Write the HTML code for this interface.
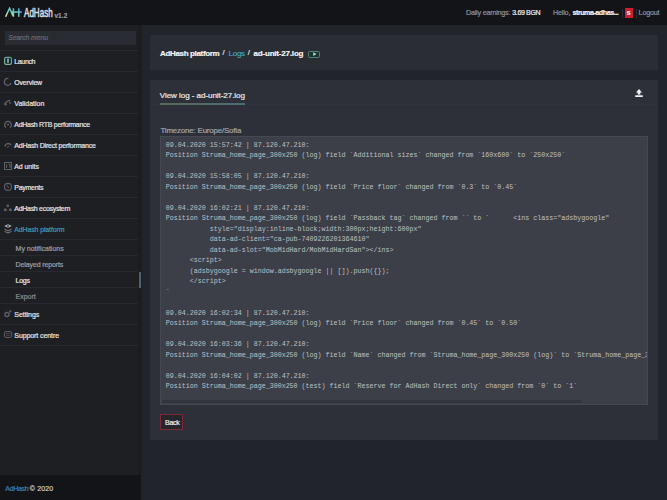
<!DOCTYPE html>
<html><head><meta charset="utf-8">
<style>
*{margin:0;padding:0}
html,body{width:667px;height:500px;overflow:hidden;background:#21242b}
body{position:relative;font-family:"Liberation Sans",sans-serif}
.b{position:absolute}
.t{position:absolute;white-space:nowrap;-webkit-text-stroke:0.2px currentColor}
</style></head><body>
<div class="b" style="left:0px;top:0px;width:667px;height:500px;background:#21242b;"></div>
<div class="b" style="left:0px;top:0px;width:667px;height:25px;background:#131418;"></div>
<div class="b" style="left:0px;top:25px;width:141px;height:450px;background:#1e1f23;"></div>
<div class="b" style="left:138px;top:25px;width:3px;height:450px;background:#1b1c20;"></div>
<div class="b" style="left:141px;top:25px;width:2px;height:450px;background:#1f2128;"></div>
<div class="b" style="left:0px;top:475px;width:141px;height:25px;background:#131418;"></div>
<svg class="b" style="left:4px;top:7px" width="19" height="11" viewBox="0 0 19 11">
<defs><linearGradient id="lg" x1="0" y1="1" x2="1" y2="0"><stop offset="0" stop-color="#e2eaa0"/><stop offset="0.45" stop-color="#7cd0c0"/><stop offset="1" stop-color="#2fa8d8"/></linearGradient></defs>
<path d="M1.6 9.8 L5.6 1.2 L8.8 8.4 M9.4 1.2 V9.8 M14.8 1.2 V9.8 M7.2 5.0 H17.8" stroke="url(#lg)" stroke-width="1.5" fill="none"/>
</svg>
<div class="t" style="left:24px;top:6.39px;font-size:12.6px;line-height:14.49px;color:#dcdde0;letter-spacing:0px;font-weight:normal;font-style:normal;font-family:'Liberation Sans',sans-serif;transform:scaleX(0.64);transform-origin:0 0;-webkit-text-stroke:0.55px currentColor;">AdHash</div>
<div class="t" style="left:54.4px;top:12.10px;font-size:6.4px;line-height:7.36px;color:#9a9ca1;letter-spacing:0.12px;font-weight:bold;font-style:normal;font-family:'Liberation Sans',sans-serif;">v1.2</div>
<div class="t" style="left:466px;top:8.57px;font-size:7.2px;line-height:8.28px;color:#909298;letter-spacing:-0.22px;font-weight:normal;font-style:normal;font-family:'Liberation Sans',sans-serif;">Daily earnings:</div>
<div class="t" style="left:512.3px;top:8.75px;font-size:7.0px;line-height:8.05px;color:#eeeeef;letter-spacing:-0.35px;font-weight:normal;font-style:normal;font-family:'Liberation Sans',sans-serif;">3.69 BGN</div>
<div class="t" style="left:553px;top:8.57px;font-size:7.2px;line-height:8.28px;color:#909298;letter-spacing:-0.2px;font-weight:normal;font-style:normal;font-family:'Liberation Sans',sans-serif;">Hello,</div>
<div class="t" style="left:572.5px;top:8.57px;font-size:7.2px;line-height:8.28px;color:#f2f2f2;letter-spacing:-0.5px;font-weight:bold;font-style:normal;font-family:'Liberation Sans',sans-serif;">struma-adhas...</div>
<div class="b" style="left:622px;top:9px;width:1px;height:9px;background:#2a2b31;"></div>
<div class="b" style="left:624.6px;top:8.2px;width:8.7px;height:10.2px;background:#cc1d2f;"></div>
<div class="t" style="left:626.7px;top:10.44px;font-size:5.6px;line-height:6.44px;color:#ffffff;letter-spacing:0px;font-weight:bold;font-style:normal;font-family:'Liberation Sans',sans-serif;">S</div>
<div class="b" style="left:636px;top:9px;width:1px;height:9px;background:#2a2b31;"></div>
<div class="t" style="left:638.6px;top:8.57px;font-size:7.2px;line-height:8.28px;color:#909298;letter-spacing:-0.2px;font-weight:normal;font-style:normal;font-family:'Liberation Sans',sans-serif;">Logout</div>
<div class="b" style="left:4.5px;top:30.5px;width:131.5px;height:14.5px;background:#2a2c33;"></div>
<div class="t" style="left:8.2px;top:34.04px;font-size:6.9px;line-height:7.93px;color:#676a72;letter-spacing:-0.12px;font-weight:normal;font-style:italic;font-family:'Liberation Sans',sans-serif;">Search menu</div>
<div class="b" style="left:0px;top:50px;width:138px;height:1px;background:#28292e;"></div>
<div class="t" style="left:14.3px;top:57.95px;font-size:7px;line-height:8.05px;color:#e4e4e6;letter-spacing:-0.36px;font-weight:normal;font-style:normal;font-family:'Liberation Sans',sans-serif;">Launch</div>
<div class="b" style="left:0px;top:71px;width:138px;height:1px;background:#28292e;"></div>
<div class="t" style="left:14.3px;top:79.00px;font-size:7px;line-height:8.05px;color:#e4e4e6;letter-spacing:-0.19px;font-weight:normal;font-style:normal;font-family:'Liberation Sans',sans-serif;">Overview</div>
<div class="b" style="left:0px;top:92px;width:138px;height:1px;background:#28292e;"></div>
<div class="t" style="left:14.3px;top:100.05px;font-size:7px;line-height:8.05px;color:#e4e4e6;letter-spacing:-0.02px;font-weight:normal;font-style:normal;font-family:'Liberation Sans',sans-serif;">Validation</div>
<div class="b" style="left:0px;top:113px;width:138px;height:1px;background:#28292e;"></div>
<div class="t" style="left:14.3px;top:121.10px;font-size:7px;line-height:8.05px;color:#e4e4e6;letter-spacing:-0.29px;font-weight:normal;font-style:normal;font-family:'Liberation Sans',sans-serif;">AdHash RTB performance</div>
<div class="b" style="left:0px;top:134px;width:138px;height:1px;background:#28292e;"></div>
<div class="t" style="left:14.3px;top:142.15px;font-size:7px;line-height:8.05px;color:#e4e4e6;letter-spacing:-0.2px;font-weight:normal;font-style:normal;font-family:'Liberation Sans',sans-serif;">AdHash Direct performance</div>
<div class="b" style="left:0px;top:155px;width:138px;height:1px;background:#28292e;"></div>
<div class="t" style="left:14.3px;top:163.20px;font-size:7px;line-height:8.05px;color:#e4e4e6;letter-spacing:-0.1px;font-weight:normal;font-style:normal;font-family:'Liberation Sans',sans-serif;">Ad units</div>
<div class="b" style="left:0px;top:176px;width:138px;height:1px;background:#28292e;"></div>
<div class="t" style="left:14.3px;top:184.25px;font-size:7px;line-height:8.05px;color:#e4e4e6;letter-spacing:-0.29px;font-weight:normal;font-style:normal;font-family:'Liberation Sans',sans-serif;">Payments</div>
<div class="b" style="left:0px;top:197px;width:138px;height:1px;background:#28292e;"></div>
<div class="t" style="left:14.3px;top:205.30px;font-size:7px;line-height:8.05px;color:#e4e4e6;letter-spacing:-0.29px;font-weight:normal;font-style:normal;font-family:'Liberation Sans',sans-serif;">AdHash ecosystem</div>
<div class="b" style="left:0px;top:218px;width:138px;height:1px;background:#28292e;"></div>
<div class="t" style="left:14.3px;top:226.35px;font-size:7px;line-height:8.05px;color:#3d97c0;letter-spacing:-0.14px;font-weight:normal;font-style:normal;font-family:'Liberation Sans',sans-serif;">AdHash platform</div>
<div class="b" style="left:0px;top:239px;width:138px;height:1px;background:#28292e;"></div>
<div class="t" style="left:15.6px;top:244.50px;font-size:7px;line-height:8.05px;color:#9d9fa5;letter-spacing:-0.01px;font-weight:normal;font-style:normal;font-family:'Liberation Sans',sans-serif;">My notifications</div>
<div class="b" style="left:0px;top:255px;width:138px;height:1px;background:#28292e;"></div>
<div class="t" style="left:15.6px;top:260.55px;font-size:7px;line-height:8.05px;color:#9d9fa5;letter-spacing:-0.12px;font-weight:normal;font-style:normal;font-family:'Liberation Sans',sans-serif;">Delayed reports</div>
<div class="b" style="left:0px;top:271px;width:138px;height:1px;background:#28292e;"></div>
<div class="t" style="left:15.6px;top:276.60px;font-size:7px;line-height:8.05px;color:#e8e8ea;letter-spacing:-0.27px;font-weight:normal;font-style:normal;font-family:'Liberation Sans',sans-serif;">Logs</div>
<div class="b" style="left:0px;top:287px;width:138px;height:1px;background:#28292e;"></div>
<div class="t" style="left:15.6px;top:292.65px;font-size:7px;line-height:8.05px;color:#8c8e94;letter-spacing:-0.02px;font-weight:normal;font-style:normal;font-family:'Liberation Sans',sans-serif;">Export</div>
<div class="b" style="left:0px;top:303px;width:138px;height:1px;background:#28292e;"></div>
<div class="t" style="left:14.3px;top:311.10px;font-size:7px;line-height:8.05px;color:#e4e4e6;letter-spacing:-0.05px;font-weight:normal;font-style:normal;font-family:'Liberation Sans',sans-serif;">Settings</div>
<div class="b" style="left:0px;top:324px;width:138px;height:1px;background:#28292e;"></div>
<div class="t" style="left:14.3px;top:332.15px;font-size:7px;line-height:8.05px;color:#e4e4e6;letter-spacing:-0.09px;font-weight:normal;font-style:normal;font-family:'Liberation Sans',sans-serif;">Support centre</div>
<div class="b" style="left:0px;top:345px;width:138px;height:1px;background:#28292e;"></div>
<div class="b" style="left:139px;top:271.6px;width:2.4px;height:16.5px;background:#4b6570;"></div>
<svg class="b" style="left:0;top:0" width="16" height="345" viewBox="0 0 16 345">
<defs><linearGradient id="lg2" x1="0" y1="1" x2="1" y2="0"><stop offset="0" stop-color="#8ab894"/><stop offset="1" stop-color="#5a9a98"/></linearGradient></defs>
<rect x="4.6" y="57.4" width="6.9" height="6.9" rx="1.6" fill="#12262a" stroke="url(#lg2)" stroke-width="1.2"/>
<path d="M8 58.6 V62.8" stroke="#9fc8c0" stroke-width="1.5"/>
<path d="M11.0 83.06 A3.4 3.4 0 1 1 8.39 78.55" stroke="#5e6067" stroke-width="1.3" fill="none"/>
<path d="M4.6 104.5 Q5.8 100.8 10.3 100.3 M9 102.8 H11.2" stroke="#5e6067" stroke-width="1.3" fill="none"/><circle cx="5.6" cy="104.2" r="1.2" fill="#5e6067"/>
<path d="M6 127.6 A3.4 3.4 0 1 1 10 127.6" stroke="#5e6067" stroke-width="1.3" fill="none"/><circle cx="8" cy="124.4" r="1" fill="#5e6067"/>
<path d="M5 146.5 A3.2 3.2 0 0 1 11 145.2" stroke="#5e6067" stroke-width="1.4" fill="none"/><path d="M7 147.5 L9 146" stroke="#5e6067" stroke-width="1" fill="none"/>
<rect x="4.5" y="162.5" width="7" height="7" fill="none" stroke="#5e6067" stroke-width="1"/><path d="M6.6 164.2 V168 M8.6 164.2 H10 V168" stroke="#5e6067" stroke-width="1" fill="none"/>
<circle cx="8" cy="186.9" r="3.5" stroke="#5e6067" stroke-width="1.1" fill="none"/><path d="M7.3 185.3 L8.5 188" stroke="#5e6067" stroke-width="1" fill="none"/>
<circle cx="7.8" cy="205.8" r="1.4" fill="#5e6067"/><circle cx="5.3" cy="209.8" r="1.5" fill="#5e6067"/><circle cx="10.3" cy="209.8" r="1.5" fill="#5e6067"/>
<path d="M4.2 226 L8 224.3 L11.8 226 L8 227.8 Z" fill="#b9babd"/><circle cx="8" cy="226" r="0.9" fill="#2a2b2f"/>
<path d="M4.5 229.2 L8 230.8 L11.5 229.2 M4.5 231.4 L8 233 L11.5 231.4" stroke="#8a8b90" stroke-width="0.9" fill="none"/>
<circle cx="7" cy="314.6" r="2.1" stroke="#5e6067" stroke-width="1.3" fill="none"/><circle cx="10.3" cy="311.4" r="1.1" fill="#5e6067"/>
<rect x="4.5" y="331.6" width="7.2" height="5.8" rx="1.3" stroke="#5e6067" stroke-width="1" fill="none"/><path d="M6 333.6 H10.2 M6 335.3 H10.2" stroke="#4c4e54" stroke-width="0.8"/>
</svg>
<div class="t" style="left:5.3px;top:484.85px;font-size:7px;line-height:8.05px;color:#3a82ae;letter-spacing:-0.32px;font-weight:normal;font-style:normal;font-family:'Liberation Sans',sans-serif;">AdHash</div>
<div class="t" style="left:29.8px;top:484.85px;font-size:7px;line-height:8.05px;color:#c9cacc;letter-spacing:0.12px;font-weight:normal;font-style:normal;font-family:'Liberation Sans',sans-serif;">© 2020</div>
<div class="b" style="left:150px;top:35px;width:508px;height:35px;background:#2b2d35;"></div>
<div class="t" style="left:160px;top:48.93px;font-size:8px;line-height:9.2px;color:#f4f4f5;letter-spacing:-0.34px;font-weight:bold;font-style:normal;font-family:'Liberation Sans',sans-serif;">AdHash platform</div>
<div class="t" style="left:222.6px;top:49.30px;font-size:7.6px;line-height:8.74px;color:#e8e8ea;letter-spacing:0px;font-weight:normal;font-style:normal;font-family:'Liberation Sans',sans-serif;">/</div>
<div class="t" style="left:228.6px;top:48.93px;font-size:8px;line-height:9.2px;color:#40a0cc;letter-spacing:-0.29px;font-weight:normal;font-style:normal;font-family:'Liberation Sans',sans-serif;">Logs</div>
<div class="t" style="left:247.8px;top:49.30px;font-size:7.6px;line-height:8.74px;color:#e8e8ea;letter-spacing:0px;font-weight:normal;font-style:normal;font-family:'Liberation Sans',sans-serif;">/</div>
<div class="t" style="left:253.5px;top:48.93px;font-size:8px;line-height:9.2px;color:#f4f4f5;letter-spacing:-0.19px;font-weight:bold;font-style:normal;font-family:'Liberation Sans',sans-serif;">ad-unit-27.log</div>
<div class="b" style="left:308.3px;top:50.6px;width:11.6px;height:7.2px;background:#1b3530;border:1px solid #587e76;border-radius:1.5px;box-sizing:border-box;"></div>
<svg class="b" style="left:312.6px;top:52.2px" width="4" height="4.2" viewBox="0 0 4 4.2"><path d="M0.2 0.2 L3.6 2.1 L0.2 4 Z" fill="#b0d2c6"/></svg>
<div class="b" style="left:150px;top:80px;width:508px;height:360px;background:#2d3038;"></div>
<div class="t" style="left:159.8px;top:91.04px;font-size:8.1px;line-height:9.31px;color:#e8e9eb;letter-spacing:-0.08px;font-weight:normal;font-style:normal;font-family:'Liberation Sans',sans-serif;">View log - ad-unit-27.log</div>
<div class="b" style="left:150px;top:104px;width:508px;height:1px;background:#31333b;"></div>
<div class="b" style="left:160px;top:103px;width:85px;height:2px;background:linear-gradient(90deg,#5a6856,#4a6e74);"></div>
<svg class="b" style="left:634.5px;top:88.8px" width="8" height="8.4" viewBox="0 0 8 8.4"><path d="M4 0 L7 3.6 H5.3 V5.4 H2.7 V3.6 H1 Z" fill="#f2f2f2"/><rect x="0.2" y="6.3" width="7.6" height="2.1" fill="#f2f2f2"/></svg>
<div class="t" style="left:160.5px;top:126.32px;font-size:7.9px;line-height:9.08px;color:#a2a5ac;letter-spacing:-0.17px;font-weight:normal;font-style:normal;font-family:'Liberation Sans',sans-serif;">Timezone: Europe/Sofia</div>
<div class="b" style="left:160px;top:136px;width:488px;height:269px;background:#3d3f48;border:1px solid #464851;box-sizing:border-box;"></div>
<div class="b" style="left:160px;top:136px;width:487px;height:269px;overflow:hidden"><pre style="position:absolute;left:5.8px;top:3.7px;margin:0;font-family:'Liberation Mono',monospace;font-size:6.67px;line-height:10.5px;color:#bdc0c5;white-space:pre">09.04.2020 15:57:42 | 87.120.47.210:
Position Struma_home_page_300x250 (log) field `Additional sizes` changed from `160x600` to `250x250`

09.04.2020 15:58:05 | 87.120.47.210:
Position Struma_home_page_300x250 (log) field `Price floor` changed from `0.3` to `0.45`

09.04.2020 16:02:21 | 87.120.47.210:
Position Struma_home_page_300x250 (log) field `Passback tag` changed from `` to `      &lt;ins class="adsbygoogle"
           style="display:inline-block;width:300px;height:600px"
           data-ad-client="ca-pub-7409226201364610"
           data-ad-slot="MobMidHard/MobMidHardSan"&gt;&lt;/ins&gt;
      &lt;script&gt;
      (adsbygoogle = window.adsbygoogle || []).push({});
      &lt;/script&gt;
`

09.04.2020 16:02:34 | 87.120.47.210:
Position Struma_home_page_300x250 (log) field `Price floor` changed from `0.45` to `0.50`

09.04.2020 16:03:36 | 87.120.47.210:
Position Struma_home_page_300x250 (log) field `Name` changed from `Struma_home_page_300x250 (log)` to `Struma_home_page_300x250 (test)`

09.04.2020 16:04:02 | 87.120.47.210:
Position Struma_home_page_300x250 (test) field `Reserve for AdHash Direct only` changed from `0` to `1`</pre></div>
<div class="b" style="left:162px;top:400.3px;width:420px;height:2.8px;background:#33353d;border-radius:1px;"></div>
<div class="b" style="left:160px;top:414px;width:23.4px;height:16px;background:#24262c;border:1px solid #7c2934;box-sizing:border-box;"></div>
<div class="t" style="left:165px;top:418.86px;font-size:7.1px;line-height:8.16px;color:#f0f0f2;letter-spacing:-0.3px;font-weight:normal;font-style:normal;font-family:'Liberation Sans',sans-serif;">Back</div>
</body></html>
